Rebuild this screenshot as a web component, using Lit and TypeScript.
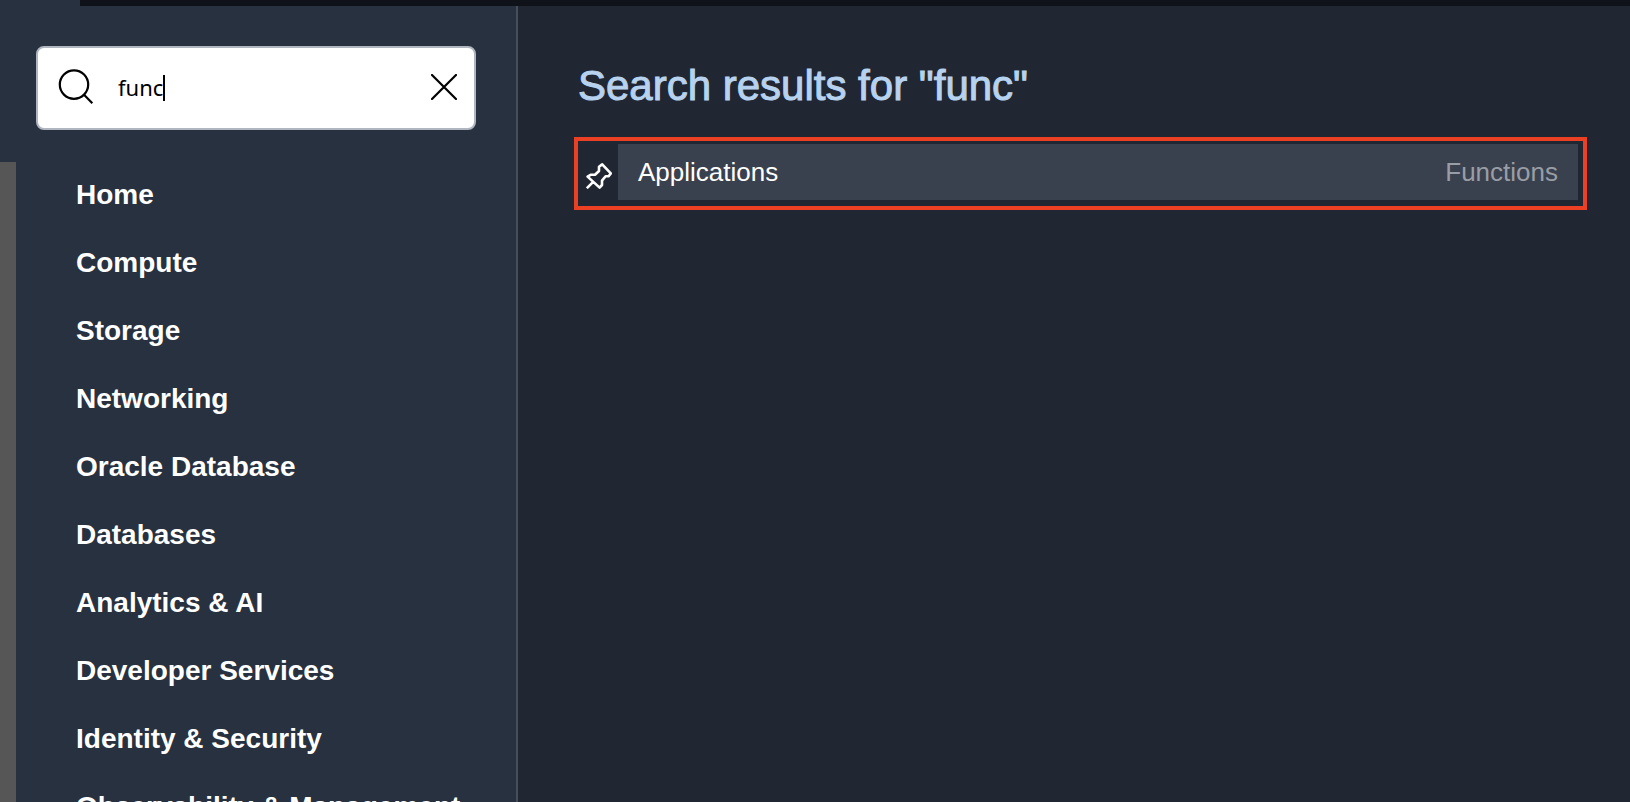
import { LitElement, html, css } from "lit";
import { customElement, state } from "lit/decorators.js";

const MENU = [
  "Home",
  "Compute",
  "Storage",
  "Networking",
  "Oracle Database",
  "Databases",
  "Analytics & AI",
  "Developer Services",
  "Identity & Security",
  "Observability & Management",
];

const RESULTS = [{ name: "Applications", group: "Functions" }];

@customElement("app-root")
export class AppRoot extends LitElement {
  @state() private query = "func";

  static styles = css`
    :host {
      display: block;
      position: relative;
      height: 100vh;
      overflow: hidden;
      background: #202732;
      color: #fff;
      font-family: "Liberation Sans", Arial, sans-serif;
    }
    * {
      box-sizing: border-box;
    }
    button {
      display: flex;
      padding: 0;
      border: 0;
      background: none;
      color: inherit;
      cursor: pointer;
    }
    svg {
      display: block;
      fill: none;
      stroke: currentColor;
      stroke-width: 2;
    }
    .topbar {
      position: absolute;
      top: 0;
      left: 80px;
      right: 0;
      height: 6px;
      background: #0f1219;
    }
    .layout {
      display: flex;
      height: 100%;
    }
    .sidebar {
      display: flex;
      flex-direction: column;
      flex: 0 0 518px;
      background: #28313f;
      border-right: 2px solid #474e5b;
    }
    .search {
      display: flex;
      align-items: center;
      height: 84px;
      margin: 46px 40px 32px 36px;
      padding: 0 17px 2px 20px;
      background: #fff;
      border: 2px solid #b0b6bf;
      border-radius: 8px;
      color: #000;
    }
    .search svg {
      stroke-width: 2.2;
    }
    .field {
      position: relative;
      flex: 1;
      min-width: 0;
      margin-left: 24px;
    }
    .field input {
      display: block;
      width: 100%;
      height: 40px;
      padding: 0;
      border: 0;
      outline: 0;
      background: none;
      color: #000;
      font: 22px/40px "Noto Sans", sans-serif;
    }
    .caret {
      position: absolute;
      top: 8px;
      left: 45px;
      width: 2px;
      height: 26px;
      background: #000;
    }
    .body {
      display: flex;
      flex: 1;
      min-height: 0;
    }
    .strip {
      flex: 0 0 16px;
      background: #565656;
    }
    .menu {
      display: flex;
      flex-direction: column;
      gap: 36px;
      margin: 0;
      padding: 17px 0 0 60px;
      list-style: none;
    }
    .menu li {
      flex: none;
    }
    .menu a {
      display: block;
      color: #fff;
      font-size: 28px;
      font-weight: 700;
      line-height: 32px;
      text-decoration: none;
      white-space: nowrap;
    }
    .main {
      flex: 1;
      min-width: 0;
      padding: 62px 43px 0 56px;
    }
    .title {
      margin: 0 0 27px;
      padding-left: 4px;
      color: #b7d2ee;
      font-size: 42px;
      font-weight: 400;
      line-height: 48px;
      -webkit-text-stroke: 1px #b7d2ee;
    }
    .results {
      margin: 0;
      padding: 3px 5px 6px 0;
      border: 4px solid #ec4025;
      list-style: none;
    }
    .result {
      display: flex;
    }
    .pin {
      flex: 0 0 40px;
      align-items: center;
      justify-content: center;
      padding: 8px 0 0 2px;
    }
    .pin svg {
      stroke-width: 2.6;
    }
    .link {
      display: flex;
      flex: 1;
      justify-content: space-between;
      padding: 0 20px;
      background: #3a414e;
      color: #fff;
      font-size: 26px;
      line-height: 56px;
      text-decoration: none;
    }
    .group {
      color: #999da5;
    }
  `;

  private onInput(e: Event) {
    this.query = (e.target as HTMLInputElement).value;
  }

  private clear() {
    this.query = "";
  }

  render() {
    return html`
      <div class="layout">
        <aside class="sidebar">
          <div class="search">
            <svg width="36" height="36" viewBox="0 0 36 36" aria-hidden="true">
              <circle cx="16" cy="15.6" r="14.2" />
              <path d="M25.8 25.6 34.3 34.2" />
            </svg>
            <div class="field">
              <input
                type="text"
                aria-label="Search"
                spellcheck="false"
                .value=${this.query}
                @input=${this.onInput}
              />
              <span class="caret"></span>
            </div>
            <button type="button" aria-label="Clear search" @click=${this.clear}>
              <svg width="26" height="26" viewBox="0 0 26 26" stroke-linecap="round">
                <path d="M1 1 25 25M25 1 1 25" />
              </svg>
            </button>
          </div>
          <div class="body">
            <div class="strip"></div>
            <nav aria-label="Main">
              <ul class="menu">
                ${MENU.map((m) => html`<li><a href="#">${m}</a></li>`)}
              </ul>
            </nav>
          </div>
        </aside>
        <main class="main">
          <h1 class="title">Search results for "${this.query}"</h1>
          <ul class="results">
            ${RESULTS.map(
              (r) => html`<li class="result">
                <button class="pin" type="button" aria-label="Pin ${r.name}">
                  <svg width="26" height="26" viewBox="0 0 26 26" stroke-linejoin="round">
                    <path
                      d="M.8 25.2 7.2 18.8M1.6 13.6 4.6 11.8H9L13 8V3.8L16.2 1.4 24.8 10.4 22.6 13.2H19.6L16 17.6V22L13.6 24.6Z"
                    />
                  </svg>
                </button>
                <a class="link" href="#"><span>${r.name}</span><span class="group">${r.group}</span></a>
              </li>`
            )}
          </ul>
        </main>
      </div>
      <div class="topbar"></div>
    `;
  }
}
